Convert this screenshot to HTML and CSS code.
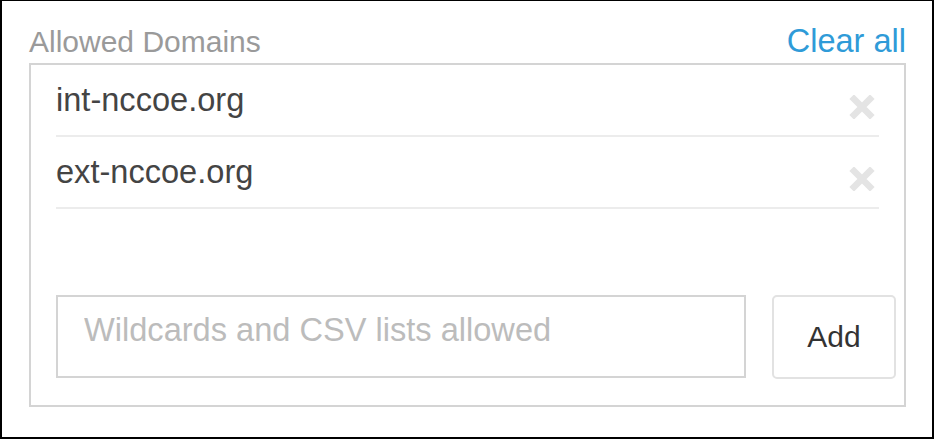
FILE: index.html
```html
<!DOCTYPE html>
<html>
<head>
<meta charset="utf-8">
<link rel="stylesheet" href="styles.css">
</head>
<body>
<div class="frame">
  <div class="header">
    <span class="label">Allowed Domains</span>
    <a class="clear">Clear all</a>
  </div>
  <div class="panel">
    <div class="list">
      <div class="item">
        <span class="domain">int-nccoe.org</span>
        <svg class="remove" width="26" height="24" viewBox="0 0 26 24"><path d="M5 4 L21 20 M21 4 L5 20" stroke="#e4e4e4" stroke-width="6.5" stroke-linecap="square"/></svg>
      </div>
      <div class="item">
        <span class="domain">ext-nccoe.org</span>
        <svg class="remove" width="26" height="24" viewBox="0 0 26 24"><path d="M5 4 L21 20 M21 4 L5 20" stroke="#e4e4e4" stroke-width="6.5" stroke-linecap="square"/></svg>
      </div>
    </div>
    <div class="form">
      <input class="input" type="text" placeholder="Wildcards and CSV lists allowed">
      <button class="add">Add</button>
    </div>
  </div>
</div>
</body>
</html>
```

FILE: styles.css
```css
html, body {
  margin: 0;
  padding: 0;
  background: #fff;
}
.frame {
  width: 934px;
  height: 439px;
  box-sizing: border-box;
  border-style: solid;
  border-color: #000;
  border-width: 1px 2px 2px 2px;
  font-family: "Liberation Sans", Arial, sans-serif;
  background: #fff;
}
.header {
  display: flex;
  justify-content: space-between;
  align-items: baseline;
  height: 62px;
  box-sizing: border-box;
  padding: 22px 26px 0 27px;
}
.label {
  font-size: 30px;
  line-height: 36px;
  color: #9a9a9a;
}
.clear {
  font-size: 32.5px;
  line-height: 36px;
  color: #2f9bd8;
  cursor: pointer;
}
.panel {
  margin: 0 26px 0 27px;
  height: 344px;
  box-sizing: border-box;
  border: 2px solid #d4d4d4;
}
.list {
  height: 230px;
  box-sizing: border-box;
  padding: 0 25px;
}
.item {
  display: flex;
  align-items: center;
  justify-content: space-between;
  height: 72px;
  box-sizing: border-box;
  border-bottom: 2px solid #ececec;
  font-size: 32.6px;
  line-height: 70px;
  color: #444;
}
.remove {
  margin-right: 4px;
  margin-top: 14px;
}
.form {
  display: flex;
  gap: 26px;
  padding: 0 7px 0 25px;
}
.input {
  width: 690px;
  height: 83px;
  box-sizing: border-box;
  border: 2px solid #d4d4d4;
  border-radius: 0;
  padding: 0 26px 14px;
  font-family: "Liberation Sans", Arial, sans-serif;
  font-size: 32.6px;
  color: #444;
  outline: none;
  margin: 0;
}
.input::placeholder {
  color: #bcbcbc;
}
.add {
  width: 124px;
  height: 84px;
  box-sizing: border-box;
  border: 2px solid #e2e2e2;
  border-radius: 5px;
  background: #fff;
  font-family: "Liberation Sans", Arial, sans-serif;
  font-size: 30px;
  color: #333;
  padding: 0;
  margin: 0;
}
```
